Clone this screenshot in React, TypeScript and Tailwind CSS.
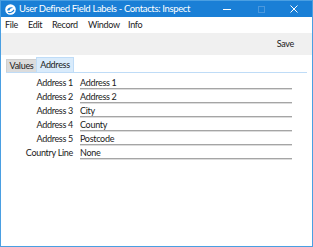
import React from "react";

const rows: [string, string][] = [
  ["Address 1", "Address 1"],
  ["Address 2", "Address 2"],
  ["Address 3", "City"],
  ["Address 4", "County"],
  ["Address 5", "Postcode"],
  ["Country Line", "None"],
];

export default function App() {
  return (
    <div
      className="w-[313px] h-[247px] flex flex-col border border-[#4a9fe2] bg-white text-[9px] text-[#1a1a1a] overflow-hidden tracking-[-0.3px]"
      style={{ fontFamily: 'Lato, "Noto Sans", sans-serif' }}
    >
      {/* Title bar */}
      <div className="h-[16px] bg-[#1a7fd6] flex items-center text-white shrink-0">
        <div className="w-[17px] flex justify-center pl-[1px]">
          <svg width="11" height="11" viewBox="0 0 11 11">
            <circle cx="5.5" cy="5.5" r="5.3" fill="#ffffff" />
            <path d="M2 6.5 C3 3.5 6.5 2.5 8.5 4.2 C7 3.8 5 4.6 4.6 6.5 Z" fill="#1a7fd6" />
            <path d="M3 8.2 C5 9.2 8 8.2 9 5.8" stroke="#1a7fd6" strokeWidth="1.2" fill="none" />
          </svg>
        </div>
        <span className="text-[9.5px] tracking-[-0.35px] leading-none ml-[1px] whitespace-nowrap">
          User Defined Field Labels - Contacts: Inspect
        </span>
        <div className="ml-auto flex items-center h-full">
          <div className="w-[34px] flex justify-center">
            <div className="w-[8px] h-[1px] bg-white" />
          </div>
          <div className="w-[34px] flex justify-center">
            <div className="w-[7px] h-[7px] border border-[#4b98dd]" />
          </div>
          <div className="w-[34px] flex justify-center pr-[2px]">
            <svg width="8" height="8" viewBox="0 0 8 8">
              <path d="M0.5 0.5 L7.5 7.5 M7.5 0.5 L0.5 7.5" stroke="#ffffff" strokeWidth="1" />
            </svg>
          </div>
        </div>
      </div>

      {/* Menu bar */}
      <div className="h-[16px] bg-white flex items-center pl-[4px] shrink-0 whitespace-nowrap">
        <span className="w-[23px]">File</span>
        <span className="w-[24px]">Edit</span>
        <span className="w-[36px]">Record</span>
        <span className="w-[40px]">Window</span>
        <span>Info</span>
      </div>

      {/* Toolbar */}
      <div className="h-[22px] bg-[#f0f0f0] flex items-center justify-end pr-[18px] shrink-0">
        <span>Save</span>
      </div>

      {/* Content */}
      <div className="flex-1 bg-white pt-[3px] px-[5px]">
        <div className="flex items-end border-b border-[#bfdcf7] h-[15px]">
          <div className="h-[13px] w-[30px] bg-[#dcdcdc] border-t border-l border-[#d0d0d0] flex items-center justify-center">
            Values
          </div>
          <div className="h-[15px] w-[38px] bg-[#d9ebfb] border border-b-0 border-[#bfdcf7] flex items-center justify-center">
            Address
          </div>
        </div>

        <div className="flex flex-col pt-[3px]">
          {rows.map(([label, value]) => (
            <div key={label} className="flex h-[14px] items-center whitespace-nowrap">
              <div className="w-[67px] text-right">{label}</div>
              <div className="ml-[7px] w-[212px] h-[12px] flex items-center border-b border-[#a5a5a5] shadow-[0_1px_0_#dcdcdc] leading-none">
                {value}
              </div>
            </div>
          ))}
        </div>
      </div>
    </div>
  );
}
